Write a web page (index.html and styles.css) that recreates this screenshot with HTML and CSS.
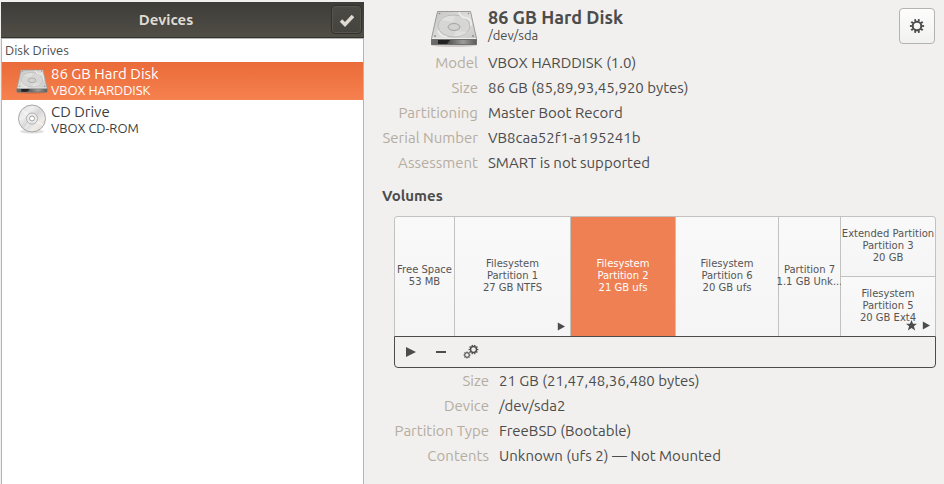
FILE: index.html
```html
<!DOCTYPE html>
<html lang="en">
<head>
<meta charset="utf-8">
<title>Disks</title>
<link rel="stylesheet" href="styles.css">
</head>
<body>
<svg class="defs" aria-hidden="true">
  <defs>
    <linearGradient id="metal" x1="0" y1="0" x2="1" y2="1">
      <stop offset="0" stop-color="#c4c4c2"/><stop offset=".5" stop-color="#dededc"/><stop offset="1" stop-color="#c4c4c2"/>
    </linearGradient>
    <linearGradient id="front" x1="0" y1="0" x2="1" y2="0">
      <stop offset="0" stop-color="#6c6c6c"/><stop offset=".4" stop-color="#5a5a5a"/><stop offset=".7" stop-color="#9c9c9a"/><stop offset="1" stop-color="#5a5a58"/>
    </linearGradient>
    <linearGradient id="disc" x1="0" y1="0" x2="1" y2="1">
      <stop offset="0" stop-color="#d4d4d4"/><stop offset=".3" stop-color="#f0f0f0"/><stop offset=".5" stop-color="#d6d6d8"/><stop offset=".72" stop-color="#f0ece8"/><stop offset="1" stop-color="#cfcfcf"/>
    </linearGradient>
  </defs>
  <symbol id="drive" viewBox="0 0 48 40">
    <ellipse cx="24" cy="37" rx="23" ry="2" fill="#000" opacity=".15"/>
    <path d="M7.500 3.500h33l6 27v6H1.500v-6z" fill="url(#metal)" stroke="#9a9a98"/>
    <path d="M1.500 31.500h45v5h-45z" fill="url(#front)" stroke="#6e6e6c"/>
    <path d="M8 32h12l-3 4H8z" fill="#222"/>
    <path d="M2 30.500h44" stroke="#eee" fill="none"/>
    <ellipse cx="24" cy="18" rx="16" ry="11" fill="#d6d6d4" stroke="#bbb"/>
    <path d="M11 12q6-5 14-4l-2 6zM37 24q-5 5-13 4l2-5z" fill="#e0e0de"/>
    <path d="M29 4q1 5 7 6t5 8M8 22q1 6 9 7" fill="none" stroke="#efefed" stroke-width="1.500"/>
    <ellipse cx="24" cy="19" rx="6" ry="3.500" fill="#cfcfcd" stroke="#999" stroke-width=".8"/>
    <ellipse cx="24" cy="19" rx="3" ry="1.500" fill="#d4d4d2"/>
    <g fill="#888"><circle cx="9.500" cy="5.500" r=".8"/><circle cx="38.500" cy="5.500" r=".8"/><circle cx="5" cy="28" r=".9"/><circle cx="43" cy="28" r=".9"/></g>
  </symbol>
  <symbol id="cd" viewBox="0 0 32 32">
    <ellipse cx="16" cy="28.500" rx="12" ry="2" fill="#000" opacity=".12"/>
    <circle cx="16" cy="15.500" r="13.500" fill="url(#disc)" stroke="#a6a6a6"/>
    <path d="M16 15.500L6 7M16 15.500l11 7M16 15.500l-7 10" stroke="#fff" stroke-width="2" opacity=".4"/>
    <circle cx="16" cy="15.500" r="5.500" fill="#ececec" stroke="#b2b2b2"/>
    <circle cx="16" cy="15.500" r="2.500" fill="#fff" stroke="#a0a0a0"/>
  </symbol>
  <symbol id="gear" viewBox="0 0 16 16">
    <circle cx="8" cy="8" r="4.300" fill="none" stroke="currentColor" stroke-width="2"/>
    <circle cx="8" cy="8" r="6" fill="none" stroke="currentColor" stroke-width="2.200" pathLength="40" stroke-dasharray="2 2" stroke-dashoffset="1"/>
  </symbol>
  <symbol id="gear-small" viewBox="0 0 16 16">
    <circle cx="8" cy="8" r="4.500" fill="none" stroke="currentColor" stroke-width="2"/>
    <path d="M8 1v3M8 12v3M1 8h3M12 8h3M3 3l2 2M11 11l2 2M3 13l2-2M11 5l2-2" stroke="currentColor" stroke-width="2.200" fill="none"/>
  </symbol>
  <symbol id="play" viewBox="0 0 10 10"><path d="M1 0l9 5-9 5z" fill="currentColor"/></symbol>
</svg>
<div class="window">
  <aside class="sidebar">
    <header class="titlebar">
      <h2>Devices</h2>
      <button class="check" aria-label="Select devices"><svg viewBox="0 0 16 16"><path d="M2 8.500L6 12.500 14 4" fill="none" stroke="currentColor" stroke-width="3.500"/></svg></button>
    </header>
    <div class="devices">
      <h3>Disk Drives</h3>
      <button class="device selected"><svg><use href="#drive"/></svg><span class="label"><span class="name">86 GB Hard Disk</span><span class="model">VBOX HARDDISK</span></span></button>
      <button class="device"><svg><use href="#cd"/></svg><span class="label"><span class="name">CD Drive</span><span class="model">VBOX CD-ROM</span></span></button>
    </div>
  </aside>
  <main>
    <header class="drive">
      <svg class="picture"><use href="#drive"/></svg>
      <div class="title"><h1>86 GB Hard Disk</h1><p>/dev/sda</p></div>
      <button class="menu" aria-label="Drive options"><svg><use href="#gear"/></svg></button>
    </header>
    <dl class="facts">
      <dt>Model</dt><dd>VBOX HARDDISK (1.0)</dd>
      <dt>Size</dt><dd>86 GB (85,89,93,45,920 bytes)</dd>
      <dt>Partitioning</dt><dd>Master Boot Record</dd>
      <dt>Serial Number</dt><dd>VB8caa52f1-a195241b</dd>
      <dt>Assessment</dt><dd>SMART is not supported</dd>
    </dl>
    <h2 class="heading">Volumes</h2>
    <section class="volumes">
      <div class="map">
        <button class="part"><span>Free Space</span><span>53 MB</span></button>
        <button class="part"><span>Filesystem</span><span>Partition 1</span><span>27 GB NTFS</span><span class="marks"><svg class="tri"><use href="#play"/></svg></span></button>
        <button class="part active"><span>Filesystem</span><span>Partition 2</span><span>21 GB ufs</span></button>
        <button class="part"><span>Filesystem</span><span>Partition 6</span><span>20 GB ufs</span></button>
        <button class="part"><span>Partition 7</span><span>1.1 GB Unk...</span></button>
        <div class="stack">
          <button class="part"><span>Extended Partition</span><span>Partition 3</span><span>20 GB</span></button>
          <button class="part"><span>Filesystem</span><span>Partition 5</span><span>20 GB Ext4</span><span class="marks"><svg class="star" viewBox="0 0 12 12"><path d="M6 0l1.700 4H12L8.600 6.900 10 11.500 6 8.800 2 11.500 3.400 6.900 0 4h4.300z" fill="currentColor"/></svg><svg class="tri"><use href="#play"/></svg></span></button>
        </div>
      </div>
      <div class="toolbar">
        <button aria-label="Mount"><svg viewBox="0 0 16 16"><path d="M3 3l10 5-10 5z" fill="currentColor"/></svg></button>
        <button aria-label="Delete partition"><svg viewBox="0 0 16 16"><path d="M3 7h10v2H3z" fill="currentColor"/></svg></button>
        <button aria-label="Partition options"><svg viewBox="0 0 16 16"><use href="#gear" x="5" y="0" width="11" height="11"/><use href="#gear-small" x="0" y="7" width="8" height="8"/></svg></button>
      </div>
    </section>
    <dl class="facts volume">
      <dt>Size</dt><dd>21 GB (21,47,48,36,480 bytes)</dd>
      <dt>Device</dt><dd>/dev/sda2</dd>
      <dt>Partition Type</dt><dd>FreeBSD (Bootable)</dd>
      <dt>Contents</dt><dd>Unknown (ufs 2) — Not Mounted</dd>
    </dl>
  </main>
</div>
</body>
</html>
```
FILE: styles.css
```css
* { box-sizing: border-box; }
body {
  margin: 0;
  background: #f1f0ee;
  color: #4c4c4c;
  font: 15px/25px Ubuntu, "Noto Sans", sans-serif;
}
h1, h2, h3, p, dl, dd { margin: 0; }
button {
  padding: 0;
  border: 0;
  background: none;
  color: inherit;
  font: inherit;
}
svg { display: block; }
.defs { position: absolute; width: 0; height: 0; }
.window {
  display: grid;
  grid-template-columns: 363px 1fr;
  min-height: 100vh;
  padding-left: 1px;
}
.sidebar { display: flex; flex-direction: column; padding-top: 2px; }
.titlebar {
  display: grid;
  grid-template-columns: 1fr auto;
  align-items: center;
  height: 36px;
  padding-right: 2px;
  background: linear-gradient(#3d3c38, #504e46);
  border-bottom: 1px solid #33322e;
  color: #dfdbd2;
}
.titlebar h2 { font-size: 15px; text-align: center; }
.check {
  display: grid;
  place-items: center;
  width: 31px;
  height: 29px;
  border: 1px solid #32312d;
  border-radius: 4px;
  background: linear-gradient(#4b4a44, #45443e);
  box-shadow: inset 0 0 0 1px #57554d;
}
.check svg { width: 16px; height: 16px; }
.devices {
  flex: 1;
  background: #fff;
  border: solid #b6b5b1;
  border-width: 1px 1px 0;
}
.devices h3 {
  padding-left: 3px;
  font-size: 13px;
  font-weight: 400;
  line-height: 23px;
}
.device {
  display: flex;
  align-items: center;
  gap: 3px;
  width: 100%;
  height: 38px;
  padding-left: 14px;
  color: #3c3c3c;
  text-align: left;
}
.device svg { width: 32px; height: 32px; }
.device.selected {
  background: linear-gradient(#e96b39, #f6814f);
  color: #fff;
}
.label, .name, .model { display: block; }
.name { line-height: 18px; }
.model { font-size: 13px; line-height: 14px; }
main { padding: 8px 8px 12px 18px; }
.drive { display: flex; gap: 10px; height: 42px; }
.picture { width: 48px; height: 40px; margin-left: 48px; }
.title { flex: 1; }
.title h1 { font-size: 18px; line-height: 18px; }
.title p { font-size: 13px; line-height: 18px; }
.menu {
  display: grid;
  place-items: center;
  width: 36px;
  height: 36px;
  margin-right: 1px;
  border: 1px solid #b4b3b0;
  border-radius: 4px;
  background: linear-gradient(#fdfdfd, #f1f1f0);
}
.menu svg { width: 16px; height: 16px; }
.facts {
  display: grid;
  grid-template-columns: 96px 1fr;
  column-gap: 10px;
}
.facts dt { color: #b5ada1; text-align: right; white-space: nowrap; }
.heading { margin-top: 8px; font-size: 15px; line-height: 25px; }
.volumes { margin: 8px 0 0 12px; }
.map {
  display: grid;
  grid-template-columns: 60fr 116fr 105fr 103fr 62fr 94fr;
  height: 120px;
  overflow: hidden;
  border: 1px solid #c2c2c0;
  border-bottom: 0;
  border-radius: 4px 4px 0 0;
}
.part {
  position: relative;
  display: flex;
  flex-direction: column;
  align-items: center;
  justify-content: center;
  min-width: 0;
  padding-bottom: 1px;
  border-right: 1px solid #c2c2c0;
  background: linear-gradient(#f9f9f9, #f5f5f5);
  color: #555;
  font: 10px/12px "DejaVu Sans", sans-serif;
  white-space: nowrap;
}
.part.active { background: #ee8053; color: #fff; }
.stack { display: grid; grid-template-rows: 59px 1fr; min-width: 0; }
.stack .part { border-right: 0; }
.stack .part + .part { border-top: 1px solid #c2c2c0; }
.marks {
  position: absolute;
  right: 5px;
  bottom: 5px;
  display: flex;
  align-items: center;
  gap: 5px;
  color: #4c4c4c;
}
.tri { width: 8px; height: 9px; }
.star { width: 11px; height: 11px; }
.toolbar {
  display: flex;
  align-items: center;
  gap: 14px;
  height: 32px;
  padding-left: 8px;
  border: 1px solid #4c4c4c;
  border-radius: 0 0 4px 4px;
}
.toolbar svg { width: 16px; height: 16px; }
.volume { grid-template-columns: 107px 1fr; }
```
